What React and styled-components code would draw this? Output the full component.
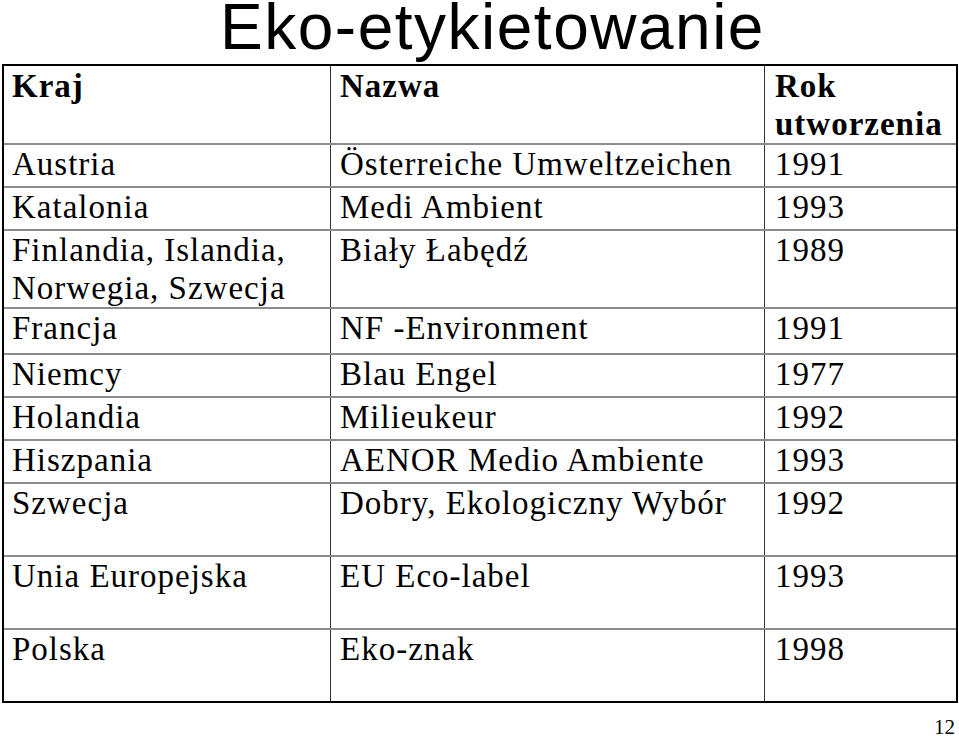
import React from "react";
import styled, { createGlobalStyle } from "styled-components";

const Global = createGlobalStyle`
  html, body {
    margin: 0;
    padding: 0;
    background: #ffffff;
    overflow: hidden;
  }
  body {
    font-family: "Liberation Serif", "Times New Roman", serif;
    color: #000;
  }
`;

const Page = styled.div`
  width: 959px;
  height: 736px;
  display: flex;
  flex-direction: column;
`;

const Title = styled.h1`
  margin: 0;
  height: 64px;
  flex: none;
  line-height: 55px;
  padding-left: 26px;
  text-align: center;
  font-family: "Liberation Sans", Arial, sans-serif;
  font-weight: 400;
  font-size: 64px;
  letter-spacing: 1.5px;
  color: #000;
`;

const Table = styled.div`
  box-sizing: border-box;
  flex: none;
  width: 956px;
  margin-left: 2px;
  border: 2px solid #000;
  display: flex;
  flex-direction: column;
`;

const Row = styled.div`
  box-sizing: border-box;
  display: grid;
  grid-template-columns: 326px 434px 1fr;
  height: ${(p) => p.$h}px;
  border-top: ${(p) => (p.$first ? "none" : "2px solid #8c8c8c")};
`;

const Cell = styled.div`
  box-sizing: border-box;
  padding: ${(p) => (p.$first ? "1px" : "0")} 6px 0 ${(p) => p.$pl}px;
  border-left: ${(p) => (p.$divider ? "1px solid #333" : "none")};
  font-size: 33px;
  line-height: 38px;
  letter-spacing: 1px;
  font-weight: ${(p) => (p.$bold ? 700 : 400)};
  white-space: pre-line;
  overflow: visible;
`;

const Footer = styled.div`
  padding: 15px 4px 0 0;
  text-align: right;
  font-size: 21px;
  line-height: 18px;
`;

const header = ["Kraj", "Nazwa", "Rok\nutworzenia"];

const rows = [
  { h: 43, c: ["Austria", "Österreiche Umweltzeichen", "1991"] },
  { h: 43, c: ["Katalonia", "Medi Ambient", "1993"] },
  { h: 78, c: ["Finlandia, Islandia,\nNorwegia, Szwecja", "Biały Łabędź", "1989"] },
  { h: 46, c: ["Francja", "NF -Environment", "1991"] },
  { h: 43, c: ["Niemcy", "Blau Engel", "1977"] },
  { h: 43, c: ["Holandia", "Milieukeur", "1992"] },
  { h: 43, c: ["Hiszpania", "AENOR Medio Ambiente", "1993"] },
  { h: 73, c: ["Szwecja", "Dobry, Ekologiczny Wybór", "1992"] },
  { h: 73, c: ["Unia Europejska", "EU Eco-label", "1993"] },
  { h: 73, c: ["Polska", "Eko-znak", "1998"] },
];

const pads = [8, 9, 10];

export default function App() {
  return (
    <Page>
      <Global />
      <Title>Eko-etykietowanie</Title>
      <Table>
        <Row $h={77} $first>
          {header.map((t, i) => (
            <Cell key={i} $bold $first $divider={i > 0} $pl={pads[i]}>
              {t}
            </Cell>
          ))}
        </Row>
        {rows.map((r, ri) => (
          <Row key={ri} $h={r.h}>
            {r.c.map((t, i) => (
              <Cell key={i} $divider={i > 0} $pl={pads[i]}>
                {t}
              </Cell>
            ))}
          </Row>
        ))}
      </Table>
      <Footer>12</Footer>
    </Page>
  );
}
